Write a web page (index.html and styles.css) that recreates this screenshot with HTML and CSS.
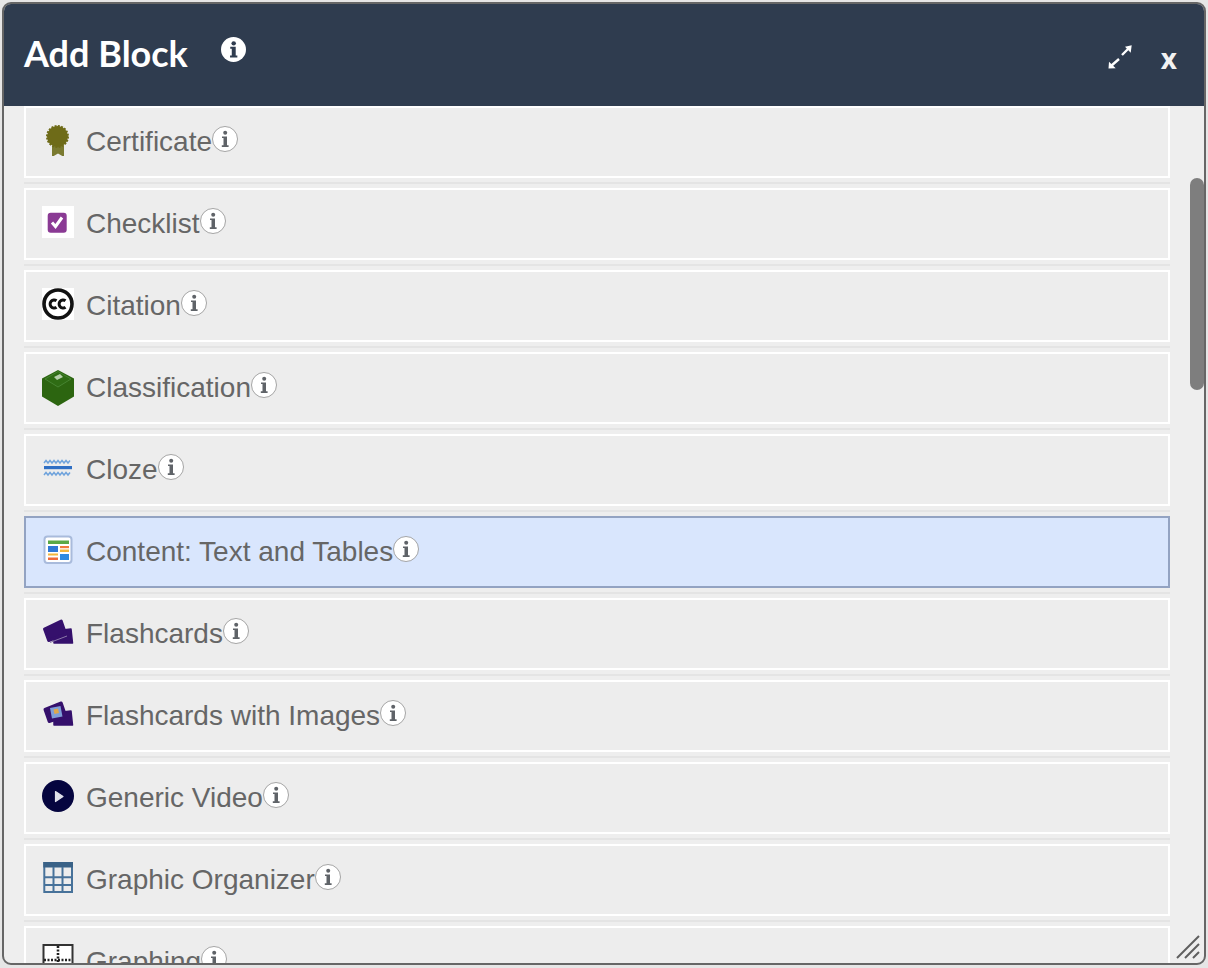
FILE: index.html
```html
<!DOCTYPE html>
<html lang="en">
<head>
<meta charset="utf-8">
<title>Add Block</title>
<link rel="stylesheet" href="styles.css">
</head>
<body>
<svg class="defs" width="0" height="0" aria-hidden="true">
  <symbol id="info" viewBox="0 0 26 26">
    <circle cx="13" cy="13" r="12.500" fill="#fff" stroke="#8f8f8f" stroke-width="0.800"/>
    <circle cx="13.200" cy="6.800" r="2" fill="#5f6368"/>
    <path d="M10 10.400h5v8.900h1.600v1.700H9.800v-1.700h1.700v-7.200H10z" fill="#5f6368"/>
  </symbol>
</svg>
<main class="modal">
  <header class="modal-head">
    <h1 class="modal-title">Add Block</h1>
    <svg class="head-info" viewBox="0 0 26 26" aria-hidden="true">
      <circle cx="13" cy="13" r="13" fill="#fff"/>
      <circle cx="13.200" cy="6.600" r="2.300" fill="#2f3c4f"/>
      <path d="M9.600 10.200h5.700v9h1.700v2H9.400v-2h1.800v-7H9.600z" fill="#2f3c4f"/>
    </svg>
    <svg class="head-expand" viewBox="0 0 26 26" aria-hidden="true">
      <path d="M1.500 24.500L2 17.700l6.700 6.600zM24.700 1.300l-6.700 1.400 5.700 6z" fill="#fff"/>
      <path d="M4 22l8-7M15 11l6-6" fill="none" stroke="#fff" stroke-width="2.400"/>
    </svg>
    <span class="head-close">x</span>
  </header>
  <div class="modal-body">
    <ul class="block-list">
      <li class="block"><div class="block-card">
        <svg class="block-icon" viewBox="0 0 32 32" aria-hidden="true">
          <path d="M10 22h12v11l-6-3.500-6 3.500z" fill="#7a7a30"/>
          <circle cx="15.500" cy="12.500" r="10.500" fill="#6e6b18" stroke="#6e6b18" stroke-width="2" stroke-dasharray="2 1.300"/>
        </svg>
        <span class="block-name">Certificate</span>
        <svg class="info"><use href="#info"/></svg>
      </div></li>
      <li class="block"><div class="block-card">
        <svg class="block-icon" viewBox="0 0 32 32" aria-hidden="true">
          <rect width="32" height="32" fill="#fff"/>
          <rect x="5.700" y="6.700" width="19" height="20" rx="3" fill="#8a3a94"/>
          <path d="M10 16.500l3.500 4 6.500-9" fill="none" stroke="#fff" stroke-width="3"/>
        </svg>
        <span class="block-name">Checklist</span>
        <svg class="info"><use href="#info"/></svg>
      </div></li>
      <li class="block"><div class="block-card">
        <svg class="block-icon" viewBox="0 0 32 32" aria-hidden="true">
          <rect width="32" height="32" fill="#fff"/>
          <circle cx="16" cy="16" r="14" fill="#fff" stroke="#111" stroke-width="3.600"/>
          <path d="M14.500 12.800a4 4 0 1 0 0 6.400M23.500 12.800a4 4 0 1 0 0 6.400" fill="none" stroke="#111" stroke-width="3"/>
        </svg>
        <span class="block-name">Citation</span>
        <svg class="info"><use href="#info"/></svg>
      </div></li>
      <li class="block"><div class="block-card">
        <svg class="block-icon icon-tall" viewBox="0 0 32 36" aria-hidden="true">
          <path d="M16 0l16 8.500v18l-16 9.500L0 26.500v-18z" fill="#2c6510"/>
          <path d="M16 1.500L29 9 16 17 3 9z" fill="#2f6c14" stroke="#4d8a3a" stroke-width="0.800"/>
          <path d="M12 7l6-3 3 3-6 3z" fill="#b5ceaa"/>
        </svg>
        <span class="block-name">Classification</span>
        <svg class="info"><use href="#info"/></svg>
      </div></li>
      <li class="block"><div class="block-card">
        <svg class="block-icon" viewBox="0 0 32 32" aria-hidden="true">
          <rect x="2" y="14" width="28" height="3.200" fill="#2f6fc4"/>
          <path d="M2 11l2-2.500 2 2.500 2-2.500 2 2.500 2-2.500 2 2.500 2-2.500 2 2.500 2-2.500 2 2.500 2-2.500 2 2.500 2-2.500M2 23l2-2.500 2 2.500 2-2.500 2 2.500 2-2.500 2 2.500 2-2.500 2 2.500 2-2.500 2 2.500 2-2.500 2 2.500 2-2.500" fill="none" stroke="#6fa3dc" stroke-width="1.500"/>
        </svg>
        <span class="block-name">Cloze</span>
        <svg class="info"><use href="#info"/></svg>
      </div></li>
      <li class="block"><div class="block-card is-active">
        <svg class="block-icon" viewBox="0 0 32 32" aria-hidden="true">
          <rect x="2.500" y="2.500" width="27" height="26.500" rx="3" fill="#fff" stroke="#a9bbdc" stroke-width="2"/>
          <rect x="6" y="6.500" width="21" height="3.500" fill="#5aa845"/>
          <rect x="6" y="12" width="10" height="6" fill="#2f78d6"/>
          <rect x="18" y="12" width="9" height="2.200" fill="#f07a3c"/>
          <rect x="18" y="15.500" width="9" height="2.500" fill="#f2b63c"/>
          <rect x="6" y="19.500" width="10" height="2" fill="#f2b63c"/>
          <rect x="18" y="20" width="9" height="6" fill="#2f8ae0"/>
          <rect x="6" y="23.500" width="10" height="2.500" fill="#ef6a3a"/>
        </svg>
        <span class="block-name">Content: Text and Tables</span>
        <svg class="info"><use href="#info"/></svg>
      </div></li>
      <li class="block"><div class="block-card">
        <svg class="block-icon" viewBox="0 0 32 32" aria-hidden="true">
          <path d="M12 15l17-2 1.500 14H12z" fill="#35106c" stroke="#35106c" stroke-width="1.500" stroke-linejoin="round"/>
          <path d="M2.500 13L19.200 5l4.500 13-17 6.500z" fill="#35106c" stroke="#35106c" stroke-width="3" stroke-linejoin="round"/>
          <path d="M8 26.500l17-6.500" fill="none" stroke="#8a78a8" stroke-width="1"/>
        </svg>
        <span class="block-name">Flashcards</span>
        <svg class="info"><use href="#info"/></svg>
      </div></li>
      <li class="block"><div class="block-card">
        <svg class="block-icon" viewBox="0 0 32 32" aria-hidden="true">
          <path d="M12 15l17-2 1.500 14H12z" fill="#35106c" stroke="#35106c" stroke-width="1.500" stroke-linejoin="round"/>
          <path d="M3 11.500L19.200 5l4.500 13-16.500 5.500z" fill="#35106c" stroke="#35106c" stroke-width="3" stroke-linejoin="round"/>
          <path d="M8 10l10.500-2 2 10.500-10.500 2z" fill="#7e9fd8"/>
          <path d="M11.500 11.500l4.500-1 1 4.500-4.500 1z" fill="#e0a84a"/>
        </svg>
        <span class="block-name">Flashcards with Images</span>
        <svg class="info"><use href="#info"/></svg>
      </div></li>
      <li class="block"><div class="block-card">
        <svg class="block-icon" viewBox="0 0 32 32" aria-hidden="true">
          <circle cx="16" cy="16" r="16" fill="#05053f"/>
          <path d="M13.500 11.500l7.500 5-7.500 5z" fill="#dfe0ea" stroke="#dfe0ea" stroke-width="1.200" stroke-linejoin="round"/>
        </svg>
        <span class="block-name">Generic Video</span>
        <svg class="info"><use href="#info"/></svg>
      </div></li>
      <li class="block"><div class="block-card">
        <svg class="block-icon" viewBox="0 0 32 32" aria-hidden="true">
          <path d="M2.300 1h27.700v29H2.300z" fill="none" stroke="#47729a" stroke-width="2"/>
          <rect x="1.300" y="0" width="29.700" height="5.500" fill="#3a6287"/>
          <path d="M11.500 5v25M20.500 5v25M2 15.300h28M2 23h28" fill="none" stroke="#47729a" stroke-width="2"/>
        </svg>
        <span class="block-name">Graphic Organizer</span>
        <svg class="info"><use href="#info"/></svg>
      </div></li>
      <li class="block"><div class="block-card">
        <svg class="block-icon" viewBox="0 0 32 32" aria-hidden="true">
          <rect x="1.500" y="1" width="29" height="30" fill="#fff" stroke="#333" stroke-width="2"/>
          <path d="M16 2v28M2 16h28" fill="none" stroke="#222" stroke-width="2.600" stroke-dasharray="2 1.500"/>
        </svg>
        <span class="block-name">Graphing</span>
        <svg class="info"><use href="#info"/></svg>
      </div></li>
    </ul>
    <div class="scrollbar"><div class="scroll-thumb"></div></div>
    <svg class="resize-grip" viewBox="0 0 24 24" aria-hidden="true">
      <path d="M1 23L23 1M9 23L23 9M17 23l6-6" fill="none" stroke="#5f5f5f" stroke-width="2"/>
    </svg>
  </div>
</main>
</body>
</html>
```
FILE: styles.css
```css
* { box-sizing: border-box; }
html, body { height: 100%; }
body {
  margin: 0;
  padding: 2px 3px 3px;
  background: #e6e6e6;
  overflow: hidden;
  font-family: "Liberation Sans", Arial, sans-serif;
}
.defs { position: absolute; }
.modal {
  height: 100%;
  display: flex;
  flex-direction: column;
  border: 2px solid #666;
  border-radius: 9px;
  overflow: hidden;
  background: #eee;
  margin-left: -1px;
  margin-right: -1px;
}
.modal-head {
  flex: none;
  height: 102px;
  display: flex;
  align-items: flex-start;
  background: #2f3c4f;
  color: #fff;
  padding: 0 27px 0 20px;
}
.modal-title {
  margin: 27px 0 0;
  font: 700 36px/44px Lato, "Liberation Sans", sans-serif;
}
.head-info { width: 25px; height: 25px; margin: 33px 0 0 33px; }
.head-expand { width: 26px; height: 26px; margin: 40px 0 0 auto; }
.head-close {
  margin: 36px 0 0 28px;
  font: 700 28px/36px "Open Sans", sans-serif;
  color: #f2f2f2;
}
.modal-body { flex: 1; min-height: 0; position: relative; overflow: hidden; }
.block-list { list-style: none; margin: 0; padding: 0 34px 0 20px; }
.block { padding-bottom: 4px; margin-bottom: 4px; border-bottom: 2px solid #e4e4e4; }
.block-card {
  height: 72px;
  display: flex;
  align-items: center;
  padding-left: 16px;
  border: 2px solid #fff;
  background: #ededed;
}
.block-card.is-active { background: #d9e6fd; border-color: #93a3c2; }
.block-icon { flex: none; width: 32px; height: 32px; margin: 0 12px 4px 0; }
.icon-tall { height: 36px; margin-bottom: 0; }
.block-name { font-size: 28px; color: #666; line-height: 32px; }
.info { flex: none; width: 26px; height: 26px; margin-bottom: 6px; }
.scrollbar { position: absolute; top: 0; right: 0; bottom: 0; width: 14px; }
.scroll-thumb {
  width: 14px;
  height: 212px;
  margin-top: 72px;
  background: #7e7e7e;
  border-radius: 7px;
}
.resize-grip { position: absolute; right: 4px; bottom: 4px; width: 24px; height: 24px; }
```
